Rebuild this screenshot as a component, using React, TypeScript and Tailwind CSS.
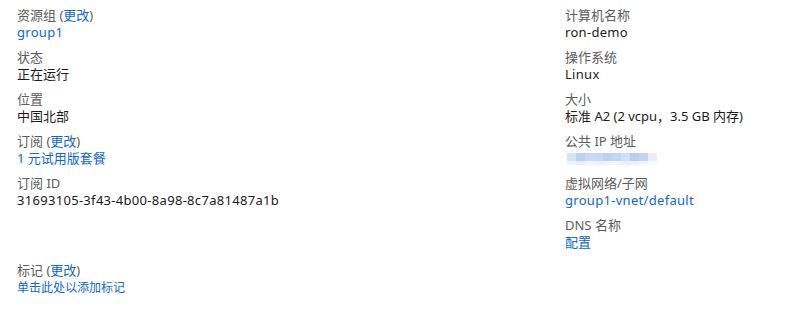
import React from "react";

const font = { fontFamily: '"Noto Sans", "Noto Sans CJK SC", sans-serif' };

function Field({ label, children }: { label: React.ReactNode; children: React.ReactNode }) {
  return (
    <div className="mb-[8px]">
      <div className="text-[13px] leading-[17px] text-[#5c5c5c]">{label}</div>
      <div className="text-[13px] leading-[17px] text-[#1b1b1b]">{children}</div>
    </div>
  );
}

const Link = ({ children }: { children: React.ReactNode }) => (
  <span className="text-[#0b68d4]">{children}</span>
);

const L = ({ children }: { children: React.ReactNode }) => (
  <span className="tracking-[0.3px]">{children}</span>
);

const blocks = ["#d6e4f8", "#b9d1f4", "#c8daf5", "#c6d9f5", "#bcd2f3", "#c3d8f4", "#cfe0f7", "#b5cef2", "#bfd5f3", "#e6effb"];
const lower = ["#eef4fc", "#e8f0fb", "#f1f6fd", "#eaf1fb", "#eef4fc", "#f0f5fd", "#e9f0fb", "#eef4fc", "#f2f6fd", "#f6f9fe"];

export default function App() {
  return (
    <div className="w-[802px] h-[309px] bg-white pl-[17px] pt-[7px]" style={font}>
      <div className="grid grid-cols-[548px_1fr]">
        <div>
          <Field label={<>资源组 (<Link>更改</Link>)</>}>
            <Link><L>group1</L></Link>
          </Field>
          <Field label="状态">正在运行</Field>
          <Field label="位置">中国北部</Field>
          <Field label={<>订阅 (<Link>更改</Link>)</>}>
            <Link>1 元试用版套餐</Link>
          </Field>
          <Field label="订阅 ID"><L>31693105-3f43-4b00-8a98-8c7a81487a1b</L></Field>
        </div>
        <div>
          <Field label="计算机名称"><L>ron-demo</L></Field>
          <Field label="操作系统"><L>Linux</L></Field>
          <Field label="大小">标准 A2 (2 vcpu，3.5 GB 内存)</Field>
          <Field label="公共 IP 地址">
            <div className="h-[17px] flex flex-col justify-center">
              <div className="flex pl-[2px]">
                {blocks.map((c, i) => (
                  <div key={i} className="w-[9px] h-[8px]" style={{ background: c }} />
                ))}
              </div>
              <div className="flex pl-[2px]">
                {lower.map((c, i) => (
                  <div key={i} className="w-[9px] h-[4px]" style={{ background: c }} />
                ))}
              </div>
            </div>
          </Field>
          <Field label="虚拟网络/子网">
            <Link><L>group1-vnet/default</L></Link>
          </Field>
          <Field label="DNS 名称">
            <Link>配置</Link>
          </Field>
        </div>
      </div>
      <div className="mt-[3px]">
        <div className="text-[13px] leading-[17px] text-[#5c5c5c]">
          标记 (<Link>更改</Link>)
        </div>
        <div className="text-[12px] leading-[18px] text-[#0b68d4]">单击此处以添加标记</div>
      </div>
    </div>
  );
}
